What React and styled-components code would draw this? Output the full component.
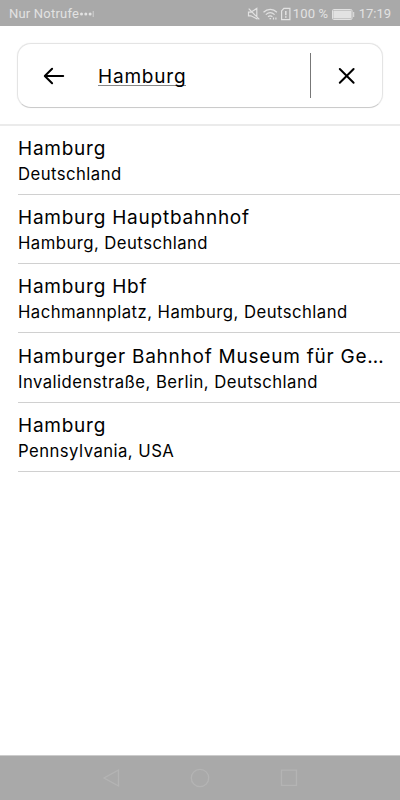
import React from 'react';
import styled, { createGlobalStyle } from 'styled-components';

const results = [
  { title: 'Hamburg', detail: 'Deutschland' },
  { title: 'Hamburg Hauptbahnhof', detail: 'Hamburg, Deutschland' },
  { title: 'Hamburg Hbf', detail: 'Hachmannplatz, Hamburg, Deutschland' },
  {
    title: 'Hamburger Bahnhof Museum für Ge…',
    detail: 'Invalidenstraße, Berlin, Deutschland',
  },
  { title: 'Hamburg', detail: 'Pennsylvania, USA' },
];

const StatusIcons = () => (
  <svg width="46" height="14" viewBox="0 0 46 14" fill="none" stroke="currentColor" strokeWidth="1.2">
    {/* muted speaker */}
    <path d="M1.5 5.2h2.4L9.8 1.4v10.4L3.9 8.8H1.5zM1.7 1.6l10.6 10.8" />
    {/* wifi */}
    <path d="M16.5 5.2c4-3.7 9.6-3.7 13.4 0M18.8 7.6c2.8-2.4 6-2.4 8.8 0M21 9.8c1.4-1.1 3-1.1 4.4 0" />
    <path d="M22.5 11.6h1.6M26.5 10.6v2M28.9 10.6v2" />
    {/* sim warning */}
    <path d="M34.6 3.8 36.9 1.4h6v11.2h-8.3z" />
    <path d="M38.8 4v4.2M38.8 9.2v1.6" strokeWidth="1.5" />
  </svg>
);

const Battery = () => (
  <svg width="23" height="11" viewBox="0 0 23 11" fill="none">
    <rect x="0.5" y="0.5" width="19.5" height="10" rx="1.2" stroke="currentColor" />
    <rect x="1.3" y="1.5" width="17.9" height="8" fill="currentColor" />
    <path d="M21.7 3v5" stroke="currentColor" />
  </svg>
);

const App = () => {
  return (
    <>
      <GlobalStyle />
      <Screen>
        <StatusBar>
          <Carrier>
            Nur Notrufe
            <svg width="15" height="12" viewBox="0 0 15 12" fill="currentColor">
              <circle cx="2.5" cy="6" r="1.5" />
              <circle cx="6.8" cy="6" r="1.5" />
              <circle cx="11.1" cy="6" r="1.5" />
              <path d="M13.8 3h.7v6h-.7z" />
            </svg>
          </Carrier>
          <StatusGroup>
            <StatusIcons />
            <Percent>100 %</Percent>
            <Battery />
            <Clock>17:19</Clock>
          </StatusGroup>
        </StatusBar>
        <Header>
          <SearchBox>
            <IconButton $width={72} aria-label="Zurück">
              <svg width="22" height="20" viewBox="0 0 22 20">
                <path d="M20.2 10H2M9.1 2.7 1.8 10l7.3 7.3" />
              </svg>
            </IconButton>
            <Query>
              <Typed>Hamburg</Typed>
            </Query>
            <Divider />
            <IconButton $width={71} aria-label="Löschen">
              <svg width="18" height="18" viewBox="0 0 18 18">
                <path d="m1.8 2 13.8 13.8M15.6 2 1.8 15.8" />
              </svg>
            </IconButton>
          </SearchBox>
        </Header>
        <Results>
          {results.map((result, index) => (
            <Result key={index}>
              <Title>{result.title}</Title>
              <Detail>{result.detail}</Detail>
            </Result>
          ))}
        </Results>
        <NavBar>
          <svg width="20" height="20" viewBox="0 0 20 20">
            <path d="M17.5 2v16L3 10z" />
          </svg>
          <svg width="20" height="20" viewBox="0 0 20 20">
            <circle cx="10" cy="10" r="8.7" />
          </svg>
          <svg width="20" height="20" viewBox="0 0 20 20">
            <path d="M2.5 2.2h15v15.2h-15z" />
          </svg>
        </NavBar>
      </Screen>
    </>
  );
};

export default App;

const GlobalStyle = createGlobalStyle`
  * {
    box-sizing: border-box;
  }

  body {
    margin: 0;
    background: #fff;
  }
`;

const Screen = styled.div`
  width: 400px;
  height: 800px;
  display: flex;
  flex-direction: column;
  overflow: hidden;
  background: #fff;
  color: #000;
  font-family: Inter, 'Liberation Sans', sans-serif;
`;

const StatusBar = styled.div`
  height: 26px;
  flex-shrink: 0;
  display: flex;
  align-items: center;
  justify-content: space-between;
  padding: 2px 9px 0;
  background: #a9a9a9;
  color: #e2e2e2;
  font-family: Roboto, sans-serif;
  font-size: 13px;
  line-height: 16px;
  white-space: nowrap;
`;

const Carrier = styled.div`
  display: flex;
  align-items: center;
  letter-spacing: 0.2px;
`;

const StatusGroup = styled.div`
  display: flex;
  align-items: center;
`;

const Percent = styled.span`
  width: 39px;
  letter-spacing: 0.2px;
`;

const Clock = styled.span`
  margin-left: 4px;
`;

const Header = styled.div`
  height: 99.8px;
  flex-shrink: 0;
  padding: 17px 17px 0;
  border-bottom: 2px solid #ebebeb;
`;

const SearchBox = styled.div`
  height: 65px;
  display: flex;
  align-items: center;
  border: 1px solid #e4e4e4;
  border-bottom-color: #cbcbcb;
  border-radius: 14px;
  box-shadow: 0 0 1px #ddd;
`;

const IconButton = styled.button`
  width: ${({ $width }) => $width}px;
  height: 100%;
  display: flex;
  justify-content: center;
  align-items: center;
  padding: 0;
  border: none;
  background: none;

  svg {
    fill: none;
    stroke: #000;
    stroke-width: 2;
    stroke-linecap: round;
    stroke-linejoin: round;
  }
`;

const Query = styled.div`
  flex: 1;
  padding: 2px 0 0 8px;
  font-size: 19px;
  line-height: 22px;
  letter-spacing: 0.8px;
`;

const Typed = styled.span`
  display: inline-block;
  height: 20px;
  border-bottom: 1px solid #888;
`;

const Divider = styled.div`
  width: 1px;
  height: 45px;
  background: #777;
`;

const Results = styled.div`
  flex: 1;
  display: flex;
  flex-direction: column;
  padding-left: 18px;
`;

const Result = styled.div`
  height: 69.2px;
  flex-shrink: 0;
  padding: 10.2px 14px 0 0;
  border-bottom: 1px solid #d0d0d0;
`;

const Title = styled.div`
  overflow: hidden;
  font-size: 19px;
  line-height: 26px;
  letter-spacing: 0.76px;
  text-overflow: ellipsis;
  white-space: nowrap;
`;

const Detail = styled.div`
  font-size: 16.7px;
  line-height: 24px;
  letter-spacing: 0.46px;
  white-space: nowrap;
`;

const NavBar = styled.div`
  height: 45px;
  flex-shrink: 0;
  display: flex;
  justify-content: center;
  align-items: center;
  gap: 69px;
  border-top: 1px solid #ccc;
  background: #a9a9a9;

  svg {
    fill: none;
    stroke: #b4b4b4;
    stroke-width: 1.3;
  }
`;
